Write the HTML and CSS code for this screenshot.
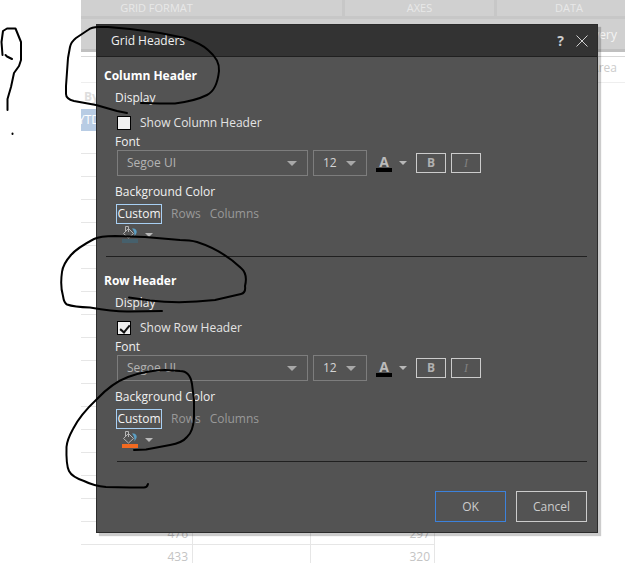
FILE: index.html
```
<!DOCTYPE html>
<html lang="en">
  <head>
    <meta charset="UTF-8" />
    <meta name="viewport" content="width=device-width, initial-scale=1.0" />
    <title>Grid Headers</title>
    <link rel="stylesheet" href="styles.css">
  </head>
  <body>
    <!-- Faded application behind the dialog -->
    <div class="app">
      <div class="tabs">
        <div class="tab">GRID FORMAT</div>
        <div class="tab">AXES</div>
        <div class="tab">DATA</div>
      </div>
      <div class="toolbar">Delivery</div>
      <div class="filters">Area</div>
      <div class="by">By</div>
      <div class="ytd">YTD</div>
      <table class="grid">
        <colgroup>
          <col class="col-first" />
          <col class="col-middle" />
          <col />
        </colgroup>
        <tbody id="rows"></tbody>
      </table>
    </div>

    <!-- Dialog -->
    <div class="dialog" role="dialog" aria-labelledby="dialog-title">
      <div class="titlebar">
        <h1 id="dialog-title">Grid Headers</h1>
        <button class="help" type="button">?</button>
        <button class="close" type="button" aria-label="Close">
          <svg width="12" height="12" viewBox="0 0 12 12"><path d="M0.5 0.5L11.5 11.5M11.5 0.5L0.5 11.5" /></svg>
        </button>
      </div>

      <form class="content">
        <section>
          <h2>Column Header</h2>
          <div class="fields">
            <h3>Display</h3>
            <label class="check"><input type="checkbox" /> Show Column Header</label>
            <h3>Font</h3>
            <div class="font-row">
              <div class="select family"><select aria-label="Column font"><option>Segoe UI</option></select></div>
              <div class="select size"><select aria-label="Column font size"><option>12</option></select></div>
              <button class="picker" type="button" aria-label="Column font color"><span class="letter">A</span><i class="caret"></i></button>
              <button class="style" type="button">B</button>
              <button class="style italic" type="button">I</button>
            </div>
            <h3>Background Color</h3>
            <div class="modes">
              <button class="mode active" type="button">Custom</button>
              <button class="mode" type="button">Rows</button>
              <button class="mode" type="button">Columns</button>
            </div>
            <button class="fill" type="button" aria-label="Column background color">
              <svg width="16" height="17" viewBox="0 0 16 17">
                <path class="water" d="M10 2.5C13 2 15.5 4 14.5 7L12.5 10.5C12.8 7 12 5 10 2.5Z" />
                <path class="bucket" d="M6.5 2.5L1.5 7.5L6.5 12L11.5 7.5L6 2M3.5 5V0.5H6.5V6" />
                <rect class="blue-bar" y="13" width="16" height="4" />
              </svg>
              <i class="caret"></i>
            </button>
          </div>
        </section>
        <hr />
        <section>
          <h2>Row Header</h2>
          <div class="fields">
            <h3>Display</h3>
            <label class="check"><input type="checkbox" checked /> Show Row Header</label>
            <h3>Font</h3>
            <div class="font-row">
              <div class="select family"><select aria-label="Row font"><option>Segoe UI</option></select></div>
              <div class="select size"><select aria-label="Row font size"><option>12</option></select></div>
              <button class="picker" type="button" aria-label="Row font color"><span class="letter">A</span><i class="caret"></i></button>
              <button class="style" type="button">B</button>
              <button class="style italic" type="button">I</button>
            </div>
            <h3>Background Color</h3>
            <div class="modes">
              <button class="mode active" type="button">Custom</button>
              <button class="mode" type="button">Rows</button>
              <button class="mode" type="button">Columns</button>
            </div>
            <button class="fill" type="button" aria-label="Row background color">
              <svg width="16" height="17" viewBox="0 0 16 17">
                <path class="water" d="M10 2.5C13 2 15.5 4 14.5 7L12.5 10.5C12.8 7 12 5 10 2.5Z" />
                <path class="bucket" d="M6.5 2.5L1.5 7.5L6.5 12L11.5 7.5L6 2M3.5 5V0.5H6.5V6" />
                <rect class="orange-bar" y="13" width="16" height="4" />
              </svg>
              <i class="caret"></i>
            </button>
          </div>
        </section>
        <hr class="inset" />
        <div class="actions">
          <button class="ok" type="button">OK</button>
          <button type="button">Cancel</button>
        </div>
      </form>
    </div>

    <!-- Pen marks -->
    <svg class="ink" width="625" height="563" viewBox="0 0 625 563">
      <path d="M2.5 55L1.5 42L3 31L7 28.5H15.5L21 42V60L19 66L14 73L11 87L7.5 99V110M5.5 55L7 56.5L12 59M12.5 133.5V134" />
      <path d="M127 113L117 111L96 105L74 101Q66 99 66 94V86L68 58L70 47Q71 42 76 38L88 30Q92 27 98 27H108L130 29L160 33L185 38Q202 44 208 50Q220 60 219 71Q217 90 207 95Q195 101 175 103.5H160L141 103" />
      <path d="M129 297.5L150 300.5Q180 304 215 300L241 294Q246 293 245 286Q248 274 241 268Q222 250 197 242Q190 240 180 240L145 237L115 236Q100 236 94 239Q77 248 71 255Q63 264 62 272Q60 286 63 296Q64 303 67 304.5Q74 307 90 307.5Q115 312 130 311.5L162 311" />
      <path d="M134 450L146 449.5L170 445Q182 443 187 437Q193 432 194 418V400L192 384Q190 371 180 371L165 370Q143 371 128 377Q112 383 97 399Q80 415 73 429Q67 440 66.5 447Q66 465 69 471Q72 477 84 481Q94 486 106 487L130 487.5H143Q147 488 148 484" />
    </svg>

    <script>
      const values = { 17: ["476", "297"], 18: ["433", "320"] };
      const rows = document.getElementById("rows");

      for (let i = 0; i < 19; i++) {
        const [first, last] = values[i] || ["", ""];
        const row = document.createElement("tr");
        row.innerHTML = `<td>${first}</td><td></td><td>${last}</td>`;
        rows.appendChild(row);
      }
    </script>
  </body>
</html>
```
FILE: styles.css
```
* {
  box-sizing: border-box;
}

body {
  position: relative;
  margin: 0;
  min-height: 100vh;
  overflow: hidden;
  background: #fff;
  font-family: "Open Sans", "Noto Sans", sans-serif;
  font-size: 12px;
  line-height: 16px;
  color: #f0f0f0;
}

h1,
h2,
h3 {
  margin: 0;
  font-size: 12px;
  font-weight: normal;
}

button,
select {
  padding: 0;
  border: 0;
  background: none;
  color: inherit;
  font: inherit;
}

/* background app */
.app {
  height: 100vh;
  margin-left: 81px;
  overflow: hidden;
}

.tabs {
  display: grid;
  grid-template-columns: 261fr 149fr 128fr;
  gap: 3px;
  border-bottom: 3px solid #c7c7c7;
  background: #c7c7c7;
}

.tab {
  background: #d0d0d0;
  color: #e8e8e8;
  font-size: 11px;
  text-align: center;
}

.tab:first-child {
  padding-right: 110px;
}

.tab:last-child {
  padding-left: 16px;
}

.toolbar {
  height: 33px;
  padding: 8px 8px 0 0;
  border-bottom: 3px solid #c0c0c0;
  background: #d0d0d0;
  color: #f4f4f4;
  text-align: right;
}

.filters {
  height: 27px;
  margin-top: 4px;
  padding: 3px 8px 0 0;
  border-top: 1px solid #d8d8d8;
  border-bottom: 1px solid #eee;
  color: #ccc;
  text-align: right;
}

.by {
  height: 26px;
  padding: 6px 3px;
  color: #ddd;
  font-weight: bold;
}

.ytd {
  width: 111px;
  height: 22px;
  padding-top: 3px;
  background: #b8cce4;
  color: #fff;
  text-indent: -3px;
}

.grid {
  width: 354px;
  border-spacing: 0;
  table-layout: fixed;
}

.col-first {
  width: 112px;
}

.col-middle {
  width: 118px;
}

.grid td {
  height: 23px;
  padding: 2px 4px 0;
  border-right: 1px solid #e6e6e6;
  border-bottom: 1px solid #e6e6e6;
  color: #c4c4c4;
  text-align: right;
}

/* dialog */
.dialog {
  position: absolute;
  top: 24px;
  left: 96px;
  right: 27px;
  border: 1px solid #2b2b2b;
  background: #535353;
  box-shadow: 3px 3px 1px rgba(0, 0, 0, 0.2);
}

.titlebar {
  display: flex;
  align-items: center;
  height: 32px;
  padding: 0 9px 0 14px;
  border-bottom: 1px solid #202020;
  background: #333;
}

.titlebar h1 {
  flex: 1;
}

.help {
  margin-right: 12px;
  color: #ccc;
  font-size: 14px;
  font-weight: bold;
}

.close svg {
  display: block;
  fill: none;
  stroke: #d0d0d0;
}

.content {
  padding: 11px 10px 10px 9px;
}

h2 {
  margin: 0 0 6px -2px;
  color: #fff;
  font-weight: bold;
}

section {
  padding-bottom: 13px;
}

.fields {
  padding-left: 9px;
}

.check {
  display: flex;
  align-items: center;
  gap: 9px;
  margin: 9px 0 3px 2px;
  color: #e4e4e4;
}

.check input {
  position: relative;
  width: 14px;
  height: 14px;
  margin: 0;
  appearance: none;
  border: 1px solid #000;
  background: #f0f0f0;
}

.check input:checked::after {
  content: "";
  position: absolute;
  top: 1px;
  left: 4px;
  width: 4px;
  height: 8px;
  border: solid #111;
  border-width: 0 2px 2px 0;
  transform: rotate(40deg);
}

.font-row {
  display: flex;
  align-items: center;
  gap: 5px;
  margin: 0 0 8px 2px;
}

.select {
  position: relative;
  height: 26px;
}

.select::after {
  content: "";
  position: absolute;
  top: 11px;
  right: 11px;
  border: 5px solid transparent;
  border-top-color: #a8a8a8;
  border-bottom: 0;
  pointer-events: none;
}

.select select {
  width: 100%;
  height: 100%;
  padding: 0 9px;
  appearance: none;
  border: 1px solid #7d7d7d;
  color: #b4b4b4;
}

.family {
  width: 191px;
}

.size {
  width: 54px;
}

.size select {
  color: #d4d4d4;
}

.picker,
.fill {
  display: flex;
  align-items: center;
  gap: 7px;
}

.picker {
  margin: 0 4px;
}

.letter {
  width: 16px;
  border-bottom: 4px solid #000;
  color: #bbb;
  font-size: 14px;
  font-weight: bold;
  line-height: 13px;
}

.caret {
  border: 4px solid transparent;
  border-top-color: #b8b8b8;
  border-bottom: 0;
}

.style {
  width: 30px;
  height: 20px;
  border: 1px solid #ccc;
  color: #b0b0b0;
  font-weight: bold;
}

.italic {
  color: #808080;
  font-family: "Liberation Serif", serif;
  font-style: italic;
  font-weight: normal;
}

.modes {
  display: flex;
  gap: 9px;
  margin: 4px 0 2px 1px;
}

.mode {
  height: 20px;
  color: #999;
}

.active {
  width: 46px;
  border: 1px solid #a8d0f4;
  color: #f4f4f4;
}

.fill {
  margin-left: 7px;
}

.fill svg {
  display: block;
}

.bucket {
  fill: none;
  stroke: #b4b4b4;
}

.water {
  fill: #5b9fc4;
}

.blue-bar {
  fill: #46606c;
}

.orange-bar {
  fill: #f26a21;
}

hr {
  height: 1px;
  margin: 0 0 16px;
  border: 0;
  background: #202020;
}

.inset {
  margin: 0 0 29px 11px;
}

.actions {
  display: flex;
  justify-content: flex-end;
  gap: 10px;
}

.actions button {
  width: 71px;
  height: 31px;
  border: 1px solid #ccc;
  color: #ccc;
}

.actions .ok {
  border-color: #3c82dc;
}

/* pen marks drawn over everything */
.ink {
  position: absolute;
  top: 0;
  left: 0;
  fill: none;
  stroke: #000;
  stroke-width: 2;
  stroke-linecap: round;
  stroke-linejoin: round;
  pointer-events: none;
}
```
